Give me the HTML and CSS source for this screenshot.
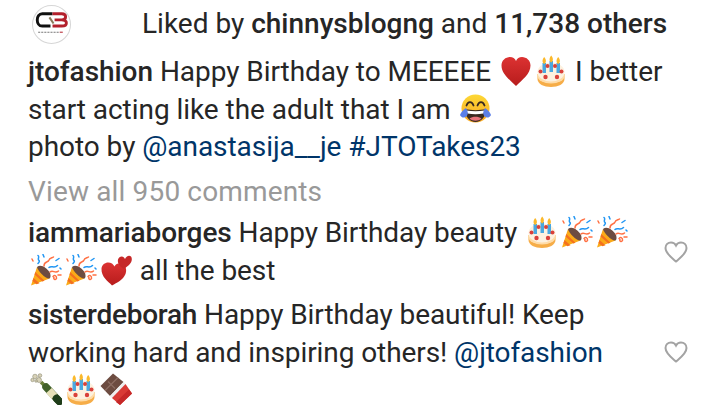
FILE: index.html
```html
<!DOCTYPE html>
<html lang="en">
<head>
<meta charset="UTF-8">
<title>Post comments</title>
<link rel="stylesheet" href="styles.css">
</head>
<body>

<!-- emoji drawings, reused below -->
<svg class="defs" width="0" height="0">
    <defs>
        <linearGradient id="g-red" x1="0" y1="0" x2="0" y2="1">
            <stop offset="0" stop-color="#dc3232"/>
            <stop offset="1" stop-color="#b71c1c"/>
        </linearGradient>
        <linearGradient id="g-face" x1="0" y1="0" x2="0" y2="1">
            <stop offset="0" stop-color="#fdd835"/>
            <stop offset="1" stop-color="#f9a825"/>
        </linearGradient>
    </defs>
    <symbol id="e-heart" viewBox="0 0 32 32">
        <path d="M16 31C10 25 1.500 19 1.500 10.500C1.500 5.500 5.500 2 10 2C12.800 2 15 3.500 16 6C17 3.500 19.200 2 22 2C26.500 2 30.500 5.500 30.500 10.500C30.500 19 22 25 16 31Z" fill="url(#g-red)"/>
    </symbol>
    <symbol id="e-cake" viewBox="0 0 32 32">
        <path d="M2.500 19V24C2.500 29 9 32 16 32C23 32 29.500 29 29.500 24V19Z" fill="#f6ad48"/>
        <ellipse cx="16" cy="21" rx="13.500" ry="7.500" fill="#ffdca8"/>
        <ellipse cx="16" cy="17" rx="13.500" ry="9.500" fill="#fdf1df"/>
        <rect x="7.500" y="8" width="3.500" height="10" fill="#4aa8e0"/>
        <rect x="14.500" y="6" width="3.500" height="11" fill="#4aa8e0"/>
        <rect x="21.500" y="8" width="3.500" height="10" fill="#4aa8e0"/>
        <path d="M9.200 2C11.500 4.500 11.500 8 9.200 9C7 8 7 4.500 9.200 2ZM16.200 0.500C18.500 3 18.500 6.500 16.200 7.500C14 6.500 14 3 16.200 0.500ZM23.200 2C25.500 4.500 25.500 8 23.200 9C21 8 21 4.500 23.200 2Z" fill="#fbb92b"/>
        <g fill="#d9403a">
            <circle cx="5.500" cy="16.500" r="2"/><circle cx="12.500" cy="11" r="2"/><circle cx="20" cy="11" r="2"/>
            <circle cx="26.500" cy="16.500" r="2"/><circle cx="10.500" cy="22" r="2.200"/><circle cx="22" cy="22" r="2.200"/>
        </g>
    </symbol>
    <symbol id="e-laugh" viewBox="0 0 32 32">
        <circle cx="16.500" cy="15.500" r="14" fill="url(#g-face)"/>
        <path d="M6 16C12 17.500 21 17.500 27 16C27 24 22 29 16.500 29C11 29 6 24 6 16Z" fill="#3a2a20"/>
        <path d="M10.500 25.500C13.500 23 19.500 23 22.500 25.500C19.500 28.500 13.500 28.500 10.500 25.500Z" fill="#e8737a"/>
        <path d="M7.500 17.500C13 18.500 20 18.500 25.500 17.500L24.500 20.500C19 21.500 14 21.500 8.500 20.500Z" fill="#fff"/>
        <path d="M7.500 12.500C9 8 13 8 14.500 12.500M18.500 12.500C20 8 24 8 25.500 12.500" fill="none" stroke="#3a2a20" stroke-width="1.800" stroke-linecap="round"/>
        <path d="M1 22C2 19 4 17 7 15C9 18 9.500 21 7.500 23.500C5 25.500 2 24.500 1 22ZM32 22C31 19 29 17 26 15C24 18 23.500 21 25.500 23.500C28 25.500 31 24.500 32 22Z" fill="#5b7fe8"/>
    </symbol>
    <symbol id="e-popper" viewBox="0 0 32 32">
        <path d="M1 31.500L7 13L19.500 24.500Z" fill="#fbaa18"/>
        <path d="M3.500 24L9.500 29.300L6.500 30.200L2.400 27ZM5.300 18L14.500 26.700L12.300 27.500L4.500 20.500Z" fill="#f4711e"/>
        <path d="M7 13C11 9.500 17 14 20 19C21 22 20.500 24.500 19 24.500C15 24.500 8 17 7 13Z" fill="#6d4c41"/>
        <g fill="none" stroke-width="1.500" stroke-linecap="round">
            <path d="M14 12C14 7 18 9 19 6C19.500 4 22 4 23.500 3" stroke="#ff7043"/>
            <path d="M20 18C23 15.500 25 20 28.500 17" stroke="#ff7043"/>
            <path d="M23 22.500C24 20.500 27 21.500 26.500 24.500C25.500 26.500 23 25 24 23.500M28 21H31" stroke="#ff7043"/>
            <path d="M8 1.500C10 3 7 5 9 6.500C10 7.500 9 8.500 8 9.500M13 0.500L14 3" stroke="#2196f3"/>
            <path d="M19 13.500C21.500 11 24 15 27.500 11.500M26 6.500L29 4.500M30 14L31 15" stroke="#2196f3"/>
            <path d="M2 5L3 7" stroke="#ff7043"/>
        </g>
    </symbol>
    <symbol id="e-hearts" viewBox="0 0 32 32">
        <path d="M12 31.500C8 27 1 23 1.500 14.500C2 9 8 7 12 9.500C13 10.300 14 11.500 14.500 12.500C16 9.500 20 8.500 22.500 10C26 12 27 16 25.500 20C23 26 17 28.500 12 31.500Z" fill="url(#g-red)"/>
        <path d="M24 15C21 13 17 10 18 5.500C19 2.500 22 1.500 24 3.500L25 5C26 2.500 29 0.500 31 2.500C33 5.500 31 9 29 11Z" fill="#c62828"/>
    </symbol>
    <symbol id="e-bottle" viewBox="0 0 32 32">
        <path d="M11 9L17 15" stroke="#6b7f3a" stroke-width="3.500" fill="none"/>
        <path d="M16 14L29 28" stroke="#41602a" stroke-width="7.500" stroke-linecap="round" fill="none"/>
        <path d="M19 17.500L24.500 23.500" stroke="#e6e0b8" stroke-width="7.500" fill="none"/>
        <path d="M26.500 25.500L29.500 28.500" stroke="#1f3d1a" stroke-width="7.500" stroke-linecap="round" fill="none"/>
        <g fill="#d8d2b8" stroke="#7d7a60" stroke-width="0.500">
            <circle cx="9" cy="7" r="2.500"/><circle cx="5" cy="3.500" r="2.300"/><circle cx="10" cy="2.500" r="1.800"/><circle cx="2.500" cy="7" r="1.700"/><circle cx="6" cy="8" r="1.300"/>
        </g>
    </symbol>
    <symbol id="e-choc" viewBox="0 0 32 32">
        <path d="M0.500 13L13 0.500L23.500 9L10 23Z" fill="#6d4c41"/>
        <path d="M5 17.500L18 4.500M8 8.500L15 15.500" stroke="#8d6e63" stroke-width="1.200" fill="none"/>
        <path d="M10 23L23.500 9L25.500 11L12 25Z" fill="#eeeeee"/>
        <path d="M12 25L25.500 11L32 20.500L20 32Z" fill="#d93a35"/>
        <path d="M16 29L29 16.500L32 20.500L20 32Z" fill="#c62828"/>
    </symbol>
</svg>

<div class="likes-row">
    <svg class="avatar" viewBox="0 0 38 38">
        <circle cx="19" cy="19" r="18.500" fill="#fff" stroke="#d6d6d6"/>
        <path d="M20 8.500H10C3.500 8.500 3.500 20.500 10 20.500H18" fill="none" stroke="#111" stroke-width="2.800"/>
        <path d="M20 8.500H29C34 8.500 34 14.500 29 14.500H22M29 14.500C35 14.500 35 20.500 29 20.500H20" fill="none" stroke="#b3202c" stroke-width="2.800"/>
        <path d="M17 12L21 18" stroke="#8a7a5a" stroke-width="2"/>
        <path d="M6 26.500H27" stroke="#777" stroke-width="1" stroke-dasharray="2 1"/>
        <path d="M27 26.500H30" stroke="#b3202c" stroke-width="1"/>
    </svg>
    <p class="likes">Liked by <b>chinnysblogng</b> and <b>11,738 others</b></p>
</div>

<p class="caption">
    <b>jtofashion</b> Happy Birthday to MEEEEE <svg class="emoji"><use href="#e-heart"/></svg><svg class="emoji"><use href="#e-cake"/></svg> I better start acting like the adult that I am <svg class="emoji"><use href="#e-laugh"/></svg><br>
    photo by <a>@anastasija__je</a> <a>#JTOTakes23</a>
</p>

<p class="view-all">View all 950 comments</p>

<div class="comment">
    <p><b>iammariaborges</b> Happy Birthday beauty <svg class="emoji"><use href="#e-cake"/></svg><svg class="emoji"><use href="#e-popper"/></svg><svg class="emoji"><use href="#e-popper"/></svg><svg class="emoji"><use href="#e-popper"/></svg><svg class="emoji"><use href="#e-popper"/></svg><svg class="emoji"><use href="#e-hearts"/></svg> all the best</p>
    <svg class="like" viewBox="0 0 24 22"><path d="M12 20.500C8 17 1.500 12.500 1.500 7C1.500 3.500 4 1.500 7 1.500C9 1.500 11 2.500 12 4.500C13 2.500 15 1.500 17 1.500C20 1.500 22.500 3.500 22.500 7C22.500 12.500 16 17 12 20.500Z"/></svg>
</div>

<div class="comment">
    <p><b class="tight">sisterdeborah</b> Happy Birthday beautiful! Keep working hard and inspiring others! <a>@jtofashion</a> <svg class="emoji"><use href="#e-bottle"/></svg><svg class="emoji"><use href="#e-cake"/></svg><svg class="emoji"><use href="#e-choc"/></svg></p>
    <svg class="like" viewBox="0 0 24 22"><path d="M12 20.500C8 17 1.500 12.500 1.500 7C1.500 3.500 4 1.500 7 1.500C9 1.500 11 2.500 12 4.500C13 2.500 15 1.500 17 1.500C20 1.500 22.500 3.500 22.500 7C22.500 12.500 16 17 12 20.500Z"/></svg>
</div>

</body>
</html>
```

FILE: styles.css
```css
html, body {
margin: 0;
height: 405px;
overflow: hidden;
}

body {
background: #fff;
color: #262626;
font-family: Roboto, "Liberation Sans", sans-serif;
font-size: 28px;
line-height: 37.5px;
padding: 4px 32px 0 28px;
box-sizing: border-box;
}

p {
margin: 0;
}

b {
font-weight: 500;
}

a {
color: #003569;
}

.tight {
letter-spacing: -0.25px;
}

.defs {
position: absolute;
}

.likes-row {
display: flex;
align-items: center;
height: 40px;
gap: 71px;
padding-left: 4px;
margin-bottom: 9px;
}

.avatar {
width: 39px;
height: 39px;
flex: none;
}

.caption {
width: 650px;
letter-spacing: -0.05px;
}

.view-all {
color: #999;
margin-top: 7px;
margin-bottom: 4px;
letter-spacing: 0.15px;
}

.comment {
display: flex;
align-items: center;
justify-content: space-between;
margin-bottom: 7px;
}

.comment p {
width: 610px;
letter-spacing: -0.08px;
}

.emoji {
width: 32px;
height: 32px;
margin: 0 1.500px;
vertical-align: -6px;
}

.like {
width: 24px;
height: 22px;
flex: none;
fill: none;
stroke: #a3a3a3;
stroke-width: 2;
}
```
